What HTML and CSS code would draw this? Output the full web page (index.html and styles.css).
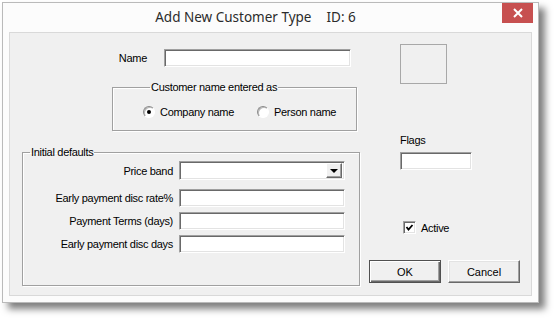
FILE: index.html
```html
<!DOCTYPE html>
<html lang="en">
<head>
  <meta charset="UTF-8">
  <title>Add New Customer Type</title>
  <link rel="stylesheet" href="styles.css">
</head>
<body>
  <div class="window">
    <div class="titlebar">
      <div class="title">Add New Customer Type<span class="title-id">ID: 6</span></div>
      <div class="close">
        <svg width="10" height="10" viewBox="0 0 10 10">
          <path d="M1 1 L9 9 M9 1 L1 9" stroke="#fff" stroke-width="2"></path>
        </svg>
      </div>
    </div>

    <div class="panel">
      <!-- left side: name and the two groups -->
      <div class="left">
        <div class="name-row">
          <label class="name-label" for="name">Name</label>
          <input class="field name-field" type="text" id="name">
        </div>

        <fieldset class="group group-customer">
          <legend>Customer name entered as</legend>
          <div class="radios">
            <span class="option option-first"><span class="radio checked"></span>Company name</span>
            <span class="option"><span class="radio"></span>Person name</span>
          </div>
        </fieldset>

        <fieldset class="group group-defaults">
          <legend>Initial defaults</legend>
          <div class="row">
            <label class="row-label">Price band</label>
            <div class="field select">
              <span class="drop"><span class="arrow"></span></span>
            </div>
          </div>
          <div class="row row-gap">
            <label class="row-label">Early payment disc rate%</label>
            <input class="field row-field" type="text">
          </div>
          <div class="row">
            <label class="row-label">Payment Terms (days)</label>
            <input class="field row-field" type="text">
          </div>
          <div class="row">
            <label class="row-label">Early payment disc days</label>
            <input class="field row-field" type="text">
          </div>
        </fieldset>
      </div>

      <!-- right side: picture, flags, active and buttons -->
      <div class="right">
        <div class="picture"></div>
        <div class="flags-label">Flags</div>
        <input class="field flags-field" type="text">
        <div class="active">
          <span class="checkbox">
            <svg width="9" height="9" viewBox="0 0 9 9">
              <polyline points="1.5,4 3.5,6.5 7.5,2" fill="none" stroke="#000" stroke-width="1.8"></polyline>
            </svg>
          </span>
          Active
        </div>
        <div class="buttons">
          <button class="btn btn-default">OK</button>
          <button class="btn">Cancel</button>
        </div>
      </div>
    </div>
  </div>
</body>
</html>
```

FILE: styles.css
```css
body {
  margin: 0;
  width: 554px;
  height: 318px;
  background: #fff;
  font-family: "Liberation Sans", Arial, sans-serif;
  font-size: 11px;
  letter-spacing: -0.3px;
  color: #000;
  overflow: hidden;
}

.window {
  box-sizing: border-box;
  margin: 2px 0 0 2px;
  width: 537px;
  height: 301px;
  border: 1px solid #bababa;
  background: #fcfcfc;
  box-shadow: 6px 6px 7px rgba(0, 0, 0, 0.5);
}

.titlebar {
  display: flex;
  height: 29px;
}

.title {
  flex: 1;
  padding-left: 6px;
  text-align: center;
  line-height: 29px;
  font-family: "Noto Sans", "Open Sans", sans-serif;
  font-size: 13.5px;
  letter-spacing: 0;
  color: #2b2b2b;
}

.title-id {
  margin-left: 15px;
}

.close {
  display: flex;
  align-items: center;
  justify-content: center;
  width: 31px;
  height: 20px;
  margin-right: 5px;
  background: #c75050;
}

.panel {
  box-sizing: border-box;
  display: flex;
  height: 264px;
  margin: 0 6px;
  border: 1px solid #d9d9d9;
  background: #f0f0f0;
}

.left {
  width: 352px;
}

.right {
  flex: 1;
  padding-left: 7px;
}

/* sunken edit box */
.field {
  box-sizing: border-box;
  display: block;
  height: 18px;
  margin: 0;
  padding: 0;
  border: 1px solid;
  border-color: #a0a0a0 #fff #fff #a0a0a0;
  box-shadow: inset 1px 1px #696969, inset -1px -1px #e3e3e3;
  background: #fff;
  font: inherit;
}

.name-row {
  display: flex;
  align-items: center;
  margin-top: 16px;
}

.name-label {
  width: 137px;
  margin-right: 17px;
  text-align: right;
}

.name-field {
  width: 187px;
}

.group {
  box-sizing: border-box;
  margin: 0;
  min-width: 0;
  border: 1px solid #a0a0a0;
  box-shadow: 1px 1px #fff, inset 1px 1px #fff;
}

.group legend {
  margin-left: 7px;
  padding: 0 1px;
  line-height: 13px;
}

.group-customer {
  width: 245px;
  margin: 14px 0 0 102px;
  padding: 11px 0 12px 30px;
}

.radios {
  display: flex;
  align-items: center;
  height: 13px;
}

.option {
  display: flex;
  align-items: center;
}

.option-first {
  width: 114px;
}

.radio {
  box-sizing: border-box;
  display: flex;
  align-items: center;
  justify-content: center;
  width: 12px;
  height: 12px;
  margin-right: 5px;
  border: 1px solid;
  border-color: #8a8a8a #fff #fff #8a8a8a;
  border-radius: 50%;
  background: #fff;
  box-shadow: inset 1px 1px #b8b8b8;
}

.radio.checked::after {
  content: "";
  width: 4px;
  height: 4px;
  border-radius: 50%;
  background: #000;
}

.group-defaults {
  width: 338px;
  margin: 15px 0 0 12px;
  padding: 2px 0 32px 0;
}

.row {
  display: flex;
  align-items: center;
  margin-top: 5px;
}

.row:first-of-type {
  margin-top: 0;
}

.row-gap {
  margin-top: 9px;
}

.row-label {
  width: 150px;
  margin-right: 6px;
  text-align: right;
}

.row-field,
.select {
  width: 166px;
}

.select {
  display: flex;
  justify-content: flex-end;
  align-items: center;
  height: 19px;
  padding-right: 2px;
}

.drop {
  box-sizing: border-box;
  display: flex;
  align-items: center;
  justify-content: center;
  width: 16px;
  height: 15px;
  border: 1px solid;
  border-color: #fff #696969 #696969 #fff;
  box-shadow: inset -1px -1px #a0a0a0;
  background: #f0f0f0;
}

.arrow {
  width: 0;
  height: 0;
  border-left: 4px solid transparent;
  border-right: 4px solid transparent;
  border-top: 4px solid #000;
}

.picture {
  box-sizing: border-box;
  width: 47px;
  height: 40px;
  margin: 11px 0 0 31px;
  border: 1px solid #a8a8a8;
}

.flags-label {
  margin: 50px 0 0 31px;
  line-height: 13px;
}

.flags-field {
  width: 72px;
  margin: 5px 0 0 31px;
}

.active {
  display: flex;
  align-items: center;
  height: 13px;
  margin: 51px 0 0 34px;
}

.checkbox {
  box-sizing: border-box;
  display: flex;
  align-items: center;
  justify-content: center;
  width: 13px;
  height: 13px;
  margin-right: 5px;
  border: 1px solid;
  border-color: #a0a0a0 #fff #fff #a0a0a0;
  box-shadow: inset 1px 1px #696969, inset -1px -1px #e3e3e3;
  background: #fff;
}

.buttons {
  display: flex;
  gap: 7px;
  margin-top: 26px;
}

.btn {
  box-sizing: border-box;
  width: 72px;
  height: 23px;
  padding: 0;
  border: 1px solid;
  border-color: #fff #696969 #696969 #fff;
  box-shadow: inset -1px -1px #a0a0a0, inset 1px 1px #e3e3e3;
  background: #f0f0f0;
  font: inherit;
  color: #000;
}

.btn-default {
  border-color: #505050;
  box-shadow: inset 1px 1px #fff, inset -1px -1px #696969, inset -2px -2px #a0a0a0;
}
```
